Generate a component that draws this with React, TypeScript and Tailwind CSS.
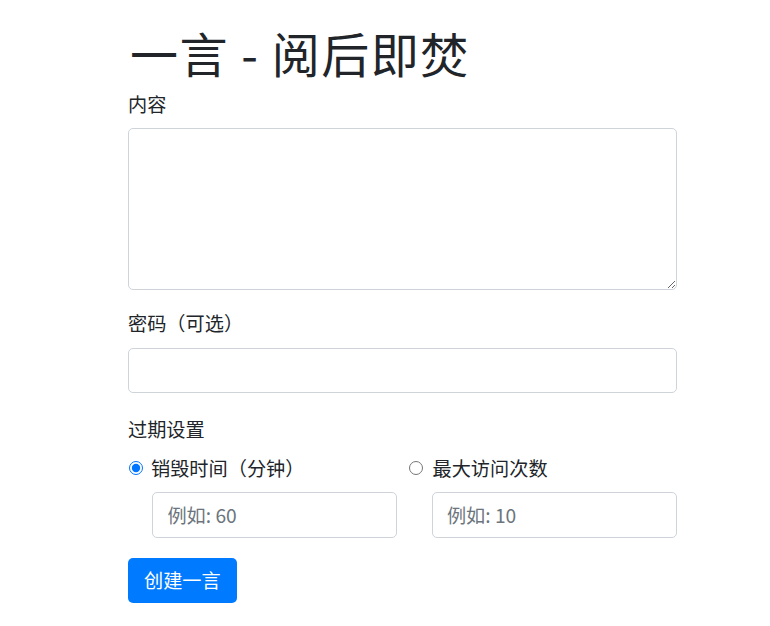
import { useState } from 'react'

const font = { fontFamily: '"Noto Sans CJK SC", "Noto Sans", sans-serif' }

const inputCls =
  'block h-[45.6px] w-full rounded-[5px] border border-[#ced4da] bg-white px-[14.4px] text-[19.2px] leading-[1.5] text-[#495057] placeholder:text-[#6c757d] outline-none'

function Label({ children }: { children: React.ReactNode }) {
  return <label className="mb-[9.6px] block text-[19.2px] leading-[28.8px]">{children}</label>
}

export default function App() {
  const [mode, setMode] = useState<'time' | 'views'>('time')

  return (
    <div className="min-h-[626px] bg-white text-[#212529]" style={font}>
      <div className="ml-[128px] w-[549px] pt-[24px]">
        <h1 className="mb-[8px] pl-[2px] text-[48px] font-normal leading-[1.2] tracking-[1.5px]">一言 - 阅后即焚</h1>

        <div className="mb-[19.2px]">
          <Label>内容</Label>
          <textarea className="block h-[162px] w-full rounded-[5px] border border-[#ced4da] bg-white px-[14.4px] py-[7.2px] text-[19.2px] outline-none" />
        </div>

        <div className="mb-[20px]">
          <Label>密码（可选）</Label>
          <input type="password" className={inputCls} />
        </div>

        <div className="pt-[2px]">
          <Label>过期设置</Label>
          <div className="mt-[3px] grid grid-cols-2 gap-x-[12px]">
            <div>
              <label className="flex items-center text-[19.2px] leading-[28.8px]">
                <input
                  type="radio"
                  name="expire"
                  checked={mode === 'time'}
                  onChange={() => setMode('time')}
                  className="m-0 ml-px mr-[8px] h-[14px] w-[14px] accent-[#0075ff]"
                />
                销毁时间（分钟）
              </label>
              <div className="mt-[10px] pl-[24px]">
                <input type="number" placeholder="例如: 60" className={inputCls} />
              </div>
            </div>
            <div>
              <label className="flex items-center text-[19.2px] leading-[28.8px]">
                <input
                  type="radio"
                  name="expire"
                  checked={mode === 'views'}
                  onChange={() => setMode('views')}
                  className="m-0 mr-[10px] h-[14px] w-[14px] accent-[#0075ff]"
                />
                最大访问次数
              </label>
              <div className="mt-[10px] pl-[23px]">
                <input type="number" placeholder="例如: 10" className={inputCls} />
              </div>
            </div>
          </div>
        </div>

        <button className="mt-[20px] h-[45px] rounded-[5px] bg-[#007bff] px-[16px] text-[19.2px] leading-[1.5] text-white">
          创建一言
        </button>
      </div>
    </div>
  )
}
